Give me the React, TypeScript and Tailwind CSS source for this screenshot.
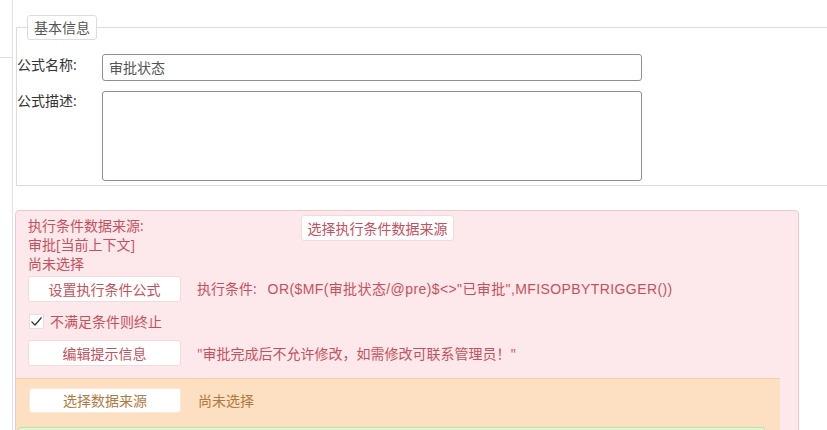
import React from "react";

const font = { fontFamily: '"Open Sans", "Noto Sans CJK SC", sans-serif' };

const WhiteButton = ({ label, className }: { label: string; className: string }) => (
  <button
    className={`bg-white border border-[#f3dadd] rounded-[3px] flex items-center justify-center shrink-0 ${className}`}
  >
    {label}
  </button>
);

export default function App() {
  return (
    <div className="w-[827px] h-[430px] overflow-hidden bg-white flex text-[14px] leading-[19px]" style={font}>
      {/* left gutter */}
      <div className="w-[12px] shrink-0">
        <div className="mt-[57px] h-px bg-[#e2e2e2]" />
      </div>

      <div className="flex-1 border-l border-[#e2e2e2] min-h-full">
        {/* 基本信息 */}
        <fieldset className="ml-[3px] mt-[15px] w-[830px] border border-[#dcdcdc] pb-[4px] text-[#333]">
          <legend className="ml-[10px] px-[6px] h-[25px] leading-[23px] border border-[#dcdcdc] rounded-[3px] text-[#555]">
            基本信息
          </legend>
          <div className="flex mt-[14px]">
            <div className="w-[85px] pt-[1px] shrink-0">公式名称:</div>
            <div className="w-[540px] h-[27px] border border-[#8f8f8f] rounded-[3px] px-[6px] leading-[25px] text-[#555]">
              审批状态
            </div>
          </div>
          <div className="flex mt-[10px]">
            <div className="w-[85px] shrink-0">公式描述:</div>
            <div className="w-[540px] h-[90px] border border-[#8f8f8f] rounded-[3px]" />
          </div>
        </fieldset>

        {/* 执行条件 */}
        <div className="ml-[2px] mt-[24px] w-[784px] h-[240px] bg-[#fde9eb] border border-[#efc9cd] rounded-[4px] pt-[5px] text-[#c8505c]">
          <div className="flex pl-[12px]">
            <div className="w-[273px] shrink-0">
              <div>执行条件数据来源:</div>
              <div>审批[当前上下文]</div>
              <div>尚未选择</div>
            </div>
            <WhiteButton label="选择执行条件数据来源" className="w-[153px] h-[26px] px-[3px] mt-[-1px]" />
          </div>

          <div className="flex items-center pl-[12px] mt-[3px]">
            <WhiteButton label="设置执行条件公式" className="w-[153px] h-[26px]" />
            <div className="ml-[16px] whitespace-nowrap">
              执行条件:&nbsp;&nbsp;&nbsp;
              <span
                className="tracking-[0.4px]"
                style={{ fontFamily: '"Liberation Sans", "Noto Sans CJK SC", sans-serif' }}
              >
                OR($MF(审批状态/@pre)$&lt;&gt;"已审批",MFISOPBYTRIGGER())
              </span>
            </div>
          </div>

          <div className="flex items-center pl-[13px] mt-[11px] h-[16px]">
            <svg width="15" height="15" viewBox="0 0 15 15" className="shrink-0">
              <rect x="0.5" y="0.5" width="14" height="14" fill="#fff" stroke="#f3dadd" />
              <path d="M2.5 7.5 L6 11 L12.5 3.5" fill="none" stroke="#333" strokeWidth="1.2" />
            </svg>
            <span className="ml-[6px]">不满足条件则终止</span>
          </div>

          <div className="flex items-center pl-[12px] mt-[11px]">
            <WhiteButton label="编辑提示信息" className="w-[153px] h-[26px]" />
            <div className="ml-[16px] whitespace-nowrap">"审批完成后不允许修改，如需修改可联系管理员！"</div>
          </div>

          {/* 数据来源 */}
          <div className="mt-[12px] w-[764px] h-[80px] bg-[#fddfc1] border-t border-[#f6cfa9] pt-[9px] text-[#b27a3e]">
            <div className="flex items-center pl-[13px]">
              <WhiteButton label="选择数据来源" className="w-[152px] h-[25px] border-[#fbe9d6]" />
              <div className="ml-[17px]">尚未选择</div>
            </div>
            <div className="ml-[2px] mt-[14px] w-[747px] h-[40px] bg-[#dff6d3] border border-[#bfe3a9] rounded-[2px]" />
          </div>
        </div>
      </div>
    </div>
  );
}
